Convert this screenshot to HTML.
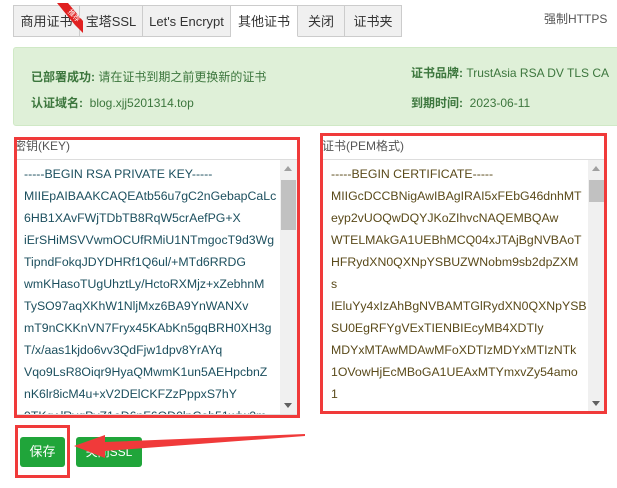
<!DOCTYPE html>
<html><head><meta charset="utf-8"><style>
*{box-sizing:border-box;margin:0;padding:0}
body{width:617px;height:488px;overflow:hidden;background:#fff;font-family:"Liberation Sans","Noto Sans CJK SC",sans-serif;font-size:12px;color:#333;position:relative}
.a{position:absolute}
.tab{position:absolute;top:5px;height:32px;border:1px solid #ccc;border-left:none;background:#f0f0f0;line-height:32px;text-align:center;font-size:13px;color:#333}
.ta{position:absolute;background:#fff;border:1px solid #ddd;overflow:hidden}
.ta .l{position:absolute;left:8px;font-size:12.3px;line-height:22px;white-space:nowrap}
.sb{position:absolute;top:0;right:0;width:17px;bottom:0;background:#f0f0f0}
.sb .th{position:absolute;left:1px;width:15px;background:#c1c1c1}
.sb .up{position:absolute;left:4px;top:6px;border:4px solid transparent;border-bottom:5px solid #a0a0a0;border-top:none}
.sb .dn{position:absolute;left:4px;bottom:6px;border:4px solid transparent;border-top:5px solid #606060;border-bottom:none}
.red{position:absolute;border:3px solid #f03a3a}
</style></head><body>
<div class="tab" style="left:13px;width:67px;border-left:1px solid #ccc">商用证书</div>
<div class="tab" style="left:80px;width:63px">宝塔SSL</div>
<div class="tab" style="left:143px;width:88px">Let's Encrypt</div>
<div class="tab" style="left:231px;width:67px;background:#fff;border-bottom-color:#fff">其他证书</div>
<div class="tab" style="left:298px;width:47px">关闭</div>
<div class="tab" style="left:345px;width:57px">证书夹</div>
<svg class="a" style="left:55px;top:3px" width="30" height="32"><polygon points="2,0 13,0 28,18 28,30 20,22" fill="#e02020"/><text x="13" y="12" font-size="7" fill="#fff" transform="rotate(45 16 10)">推荐</text></svg>
<div class="a" style="left:544px;top:10px;font-size:12px;color:#555">强制HTTPS</div>
<div class="a" style="left:13px;top:47px;width:610px;height:79px;background:#dff0d8;border:1px solid #d0e9c6;border-radius:3px"></div>
<div class="a" style="left:31px;top:68px;font-size:12px;color:#3c763d"><b>已部署成功:</b> 请在证书到期之前更换新的证书</div>
<div class="a" style="left:31px;top:94px;font-size:12px;color:#3c763d"><b>认证域名:</b>&nbsp; blog.xjj5201314.top</div>
<div class="a" style="left:411px;top:64px;font-size:12px;color:#3c763d"><b>证书品牌:</b> TrustAsia RSA DV TLS CA</div>
<div class="a" style="left:411px;top:94px;font-size:12px;color:#3c763d"><b>到期时间:</b>&nbsp; 2023-06-11</div>

<div class="a" style="left:14px;top:137px;font-size:12px;color:#555">密钥(KEY)</div>
<div class="ta" style="left:15px;top:159px;width:283px;height:256px;color:#1c4f5e">
<div class="l" style="top:3px">-----BEGIN RSA PRIVATE KEY-----</div>
<div class="l" style="top:25px">MIIEpAIBAAKCAQEAtb56u7gC2nGebapCaLc</div>
<div class="l" style="top:47px">6HB1XAvFWjTDbTB8RqW5crAefPG+X</div>
<div class="l" style="top:69px">iErSHiMSVVwmOCUfRMiU1NTmgocT9d3Wg</div>
<div class="l" style="top:91px">TipndFokqJDYDHRf1Q6ul/+MTd6RRDG</div>
<div class="l" style="top:113px">wmKHasoTUgUhztLy/HctoRXMjz+xZebhnM</div>
<div class="l" style="top:135px">TySO97aqXKhW1NljMxz6BA9YnWANXv</div>
<div class="l" style="top:157px">mT9nCKKnVN7Fryx45KAbKn5gqBRH0XH3g</div>
<div class="l" style="top:179px">T/x/aas1kjdo6vv3QdFjw1dpv8YrAYq</div>
<div class="l" style="top:201px">Vqo9LsR8Oiqr9HyaQMwmK1un5AEHpcbnZ</div>
<div class="l" style="top:223px">nK6lr8icM4u+xV2DElCKFZzPppxS7hY</div>
<div class="l" style="top:245px">9TKq+lRyqPvZ1oD6nF6OD0lpCoh51wlw2m</div>
<div class="sb"><div class="up"></div><div class="th" style="top:20px;height:50px"></div><div class="dn"></div></div>
</div>
<div class="red" style="left:14px;top:137px;width:286px;height:281px"></div>

<div class="a" style="left:322px;top:137px;font-size:12px;color:#555">证书(PEM格式)</div>
<div class="ta" style="left:322px;top:159px;width:284px;height:254px;color:#5a4a1a">
<div class="l" style="top:3px">-----BEGIN CERTIFICATE-----</div>
<div class="l" style="top:25px">MIIGcDCCBNigAwIBAgIRAI5xFEbG46dnhMT</div>
<div class="l" style="top:47px">eyp2vUOQwDQYJKoZIhvcNAQEMBQAw</div>
<div class="l" style="top:69px">WTELMAkGA1UEBhMCQ04xJTAjBgNVBAoT</div>
<div class="l" style="top:91px">HFRydXN0QXNpYSBUZWNobm9sb2dpZXM</div>
<div class="l" style="top:113px">s</div>
<div class="l" style="top:135px">IEluYy4xIzAhBgNVBAMTGlRydXN0QXNpYSB</div>
<div class="l" style="top:157px">SU0EgRFYgVExTIENBIEcyMB4XDTIy</div>
<div class="l" style="top:179px">MDYxMTAwMDAwMFoXDTIzMDYxMTIzNTk</div>
<div class="l" style="top:201px">1OVowHjEcMBoGA1UEAxMTYmxvZy54amo</div>
<div class="l" style="top:223px">1</div>
<div class="l" style="top:245px">MjAxMzE0LnRvcDCCASIwDQYJKoZIhvcNAQ</div>
<div class="sb"><div class="up"></div><div class="th" style="top:20px;height:22px"></div><div class="dn"></div></div>
</div>
<div class="red" style="left:320px;top:133px;width:287px;height:281px"></div>

<div class="a" style="left:20px;top:437px;width:45px;height:30px;background:#20a53a;border-radius:3px;color:#fff;font-size:13px;line-height:30px;text-align:center">保存</div>
<div class="a" style="left:76px;top:437px;width:66px;height:30px;background:#20a53a;border-radius:3px;color:#fff;font-size:12px;line-height:30px;text-align:center">关闭SSL</div>
<div class="red" style="left:15px;top:425px;width:55px;height:53px"></div>
<svg class="a" style="left:70px;top:430px" width="240" height="30"><polygon points="235,4 35,12 35,5 4,16 35,28 35,21 235,6" fill="#f03a3a"/></svg>
</body></html>
